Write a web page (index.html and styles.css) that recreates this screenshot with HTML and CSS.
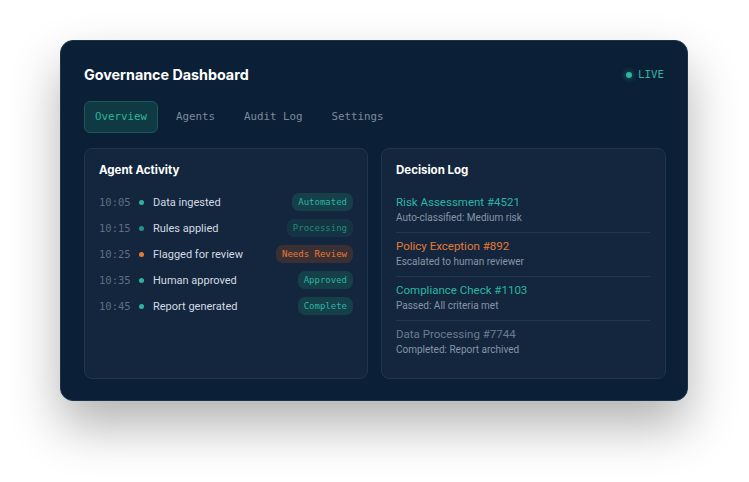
FILE: index.html
```html
<!DOCTYPE html>
<html lang="en">
<head>
    <meta charset="UTF-8">
    <meta name="viewport" content="width=device-width, initial-scale=1.0">
    <title>Governance Dashboard</title>
    <link rel="stylesheet" href="styles.css">
</head>
<body>
    <div class="dashboard">
        <div class="header">
            <h1>Governance Dashboard</h1>
            <div class="live"><span class="live-dot"></span>LIVE</div>
        </div>

        <nav class="tabs">
            <span class="tab active">Overview</span>
            <span class="tab">Agents</span>
            <span class="tab">Audit Log</span>
            <span class="tab">Settings</span>
        </nav>

        <div class="panels">
            <section class="panel">
                <h2>Agent Activity</h2>
                <ul class="activity">
                    <li>
                        <span class="time">10:05</span>
                        <span class="dot"></span>
                        <span class="event">Data ingested</span>
                        <span class="badge">Automated</span>
                    </li>
                    <li>
                        <span class="time">10:15</span>
                        <span class="dot dim"></span>
                        <span class="event">Rules applied</span>
                        <span class="badge dim">Processing</span>
                    </li>
                    <li>
                        <span class="time">10:25</span>
                        <span class="dot warn"></span>
                        <span class="event">Flagged for review</span>
                        <span class="badge warn">Needs Review</span>
                    </li>
                    <li>
                        <span class="time">10:35</span>
                        <span class="dot"></span>
                        <span class="event">Human approved</span>
                        <span class="badge">Approved</span>
                    </li>
                    <li>
                        <span class="time">10:45</span>
                        <span class="dot"></span>
                        <span class="event">Report generated</span>
                        <span class="badge">Complete</span>
                    </li>
                </ul>
            </section>

            <section class="panel">
                <h2>Decision Log</h2>
                <ul class="decisions">
                    <li>
                        <div class="decision-title">Risk Assessment #4521</div>
                        <div class="decision-note">Auto-classified: Medium risk</div>
                    </li>
                    <li>
                        <div class="decision-title warn">Policy Exception #892</div>
                        <div class="decision-note">Escalated to human reviewer</div>
                    </li>
                    <li>
                        <div class="decision-title">Compliance Check #1103</div>
                        <div class="decision-note">Passed: All criteria met</div>
                    </li>
                    <li>
                        <div class="decision-title muted">Data Processing #7744</div>
                        <div class="decision-note">Completed: Report archived</div>
                    </li>
                </ul>
            </section>
        </div>
    </div>
</body>
</html>
```

FILE: styles.css
```css
html, body {
    height: 100%;
}
body {
    margin: 0;
    padding: 40px 0 0 60px;
    box-sizing: border-box;
    background-color: #ffffff;
    font-family: Roboto, "Noto Sans", sans-serif;
}
.dashboard {
    width: 628px;
    height: 361px;
    box-sizing: border-box;
    padding: 24px 23px 21px 23px;
    background-color: #0b1f37;
    border: 1px solid #17344a;
    border-radius: 13px;
    box-shadow: 0 25px 50px rgba(0, 0, 0, 0.3);
    display: flex;
    flex-direction: column;
}
.header {
    display: flex;
    justify-content: space-between;
    align-items: center;
    height: 20px;
}
h1 {
    margin: 0;
    font-family: Inter, Roboto, sans-serif;
    font-size: 14.3px;
    font-weight: 700;
    color: #ffffff;
}
.live {
    display: flex;
    align-items: center;
    gap: 6px;
    font-family: "DejaVu Sans Mono", monospace;
    font-size: 10.8px;
    color: #2bb5a1;
}
.live-dot {
    width: 6px;
    height: 6px;
    border-radius: 50%;
    background-color: #2bb5a1;
    box-shadow: 0 0 6px rgba(43, 181, 161, 0.7);
}
.tabs {
    display: flex;
    gap: 7px;
    margin-top: 17px;
}
.tab {
    padding: 0 10px;
    height: 30px;
    line-height: 30px;
    font-family: "DejaVu Sans Mono", monospace;
    font-size: 10.8px;
    color: #7d8b9c;
    border: 1px solid transparent;
    border-radius: 6px;
}
.tab.active {
    color: #2bb5a1;
    background-color: #0f3a43;
    border-color: #1b5a5a;
}
.panels {
    flex: 1;
    display: grid;
    grid-template-columns: 284px 285px;
    gap: 13px;
    margin-top: 15px;
}
.panel {
    background-color: #13263d;
    border: 1px solid #1f3550;
    border-radius: 8px;
    padding: 13px 14px 14px 14px;
}
h2 {
    margin: 0;
    font-family: Inter, Roboto, sans-serif;
    font-size: 11.5px;
    line-height: 16px;
    font-weight: 700;
    color: #ffffff;
}
ul {
    list-style: none;
    margin: 0;
    padding: 0;
}
.activity {
    margin-top: 15px;
    display: flex;
    flex-direction: column;
    gap: 8px;
}
.activity li {
    display: flex;
    align-items: center;
    height: 18px;
}
.time {
    width: 40px;
    font-family: "DejaVu Sans Mono", monospace;
    font-size: 10.5px;
    color: #5e6e82;
}
.dot {
    width: 5px;
    height: 5px;
    border-radius: 50%;
    background-color: #2bb5a1;
    margin-right: 9px;
}
.dot.dim {
    background-color: #229489;
}
.dot.warn {
    background-color: #e47b35;
}
.event {
    flex: 1;
    font-size: 11px;
    color: #d3dae3;
}
.badge {
    height: 18px;
    line-height: 18px;
    padding: 0 6px;
    border-radius: 7px;
    font-family: "DejaVu Sans Mono", monospace;
    font-size: 9px;
    color: #2bb5a1;
    background-color: #153f49;
}
.badge.dim {
    color: #22887f;
    background-color: #143443;
}
.badge.warn {
    color: #e47b35;
    background-color: #3a3034;
}
.decisions {
    margin-top: 11px;
    padding-right: 1px;
}
.decisions li {
    padding: 5px 0 7px 0;
    border-bottom: 1px solid #22384f;
}
.decisions li:last-child {
    border-bottom: none;
}
.decision-title {
    font-size: 11.5px;
    line-height: 16px;
    color: #2bb5a1;
}
.decision-title.warn {
    color: #e47b35;
}
.decision-title.muted {
    color: #6c7b8e;
}
.decision-note {
    font-size: 10px;
    line-height: 15px;
    color: #8795a6;
}
```
